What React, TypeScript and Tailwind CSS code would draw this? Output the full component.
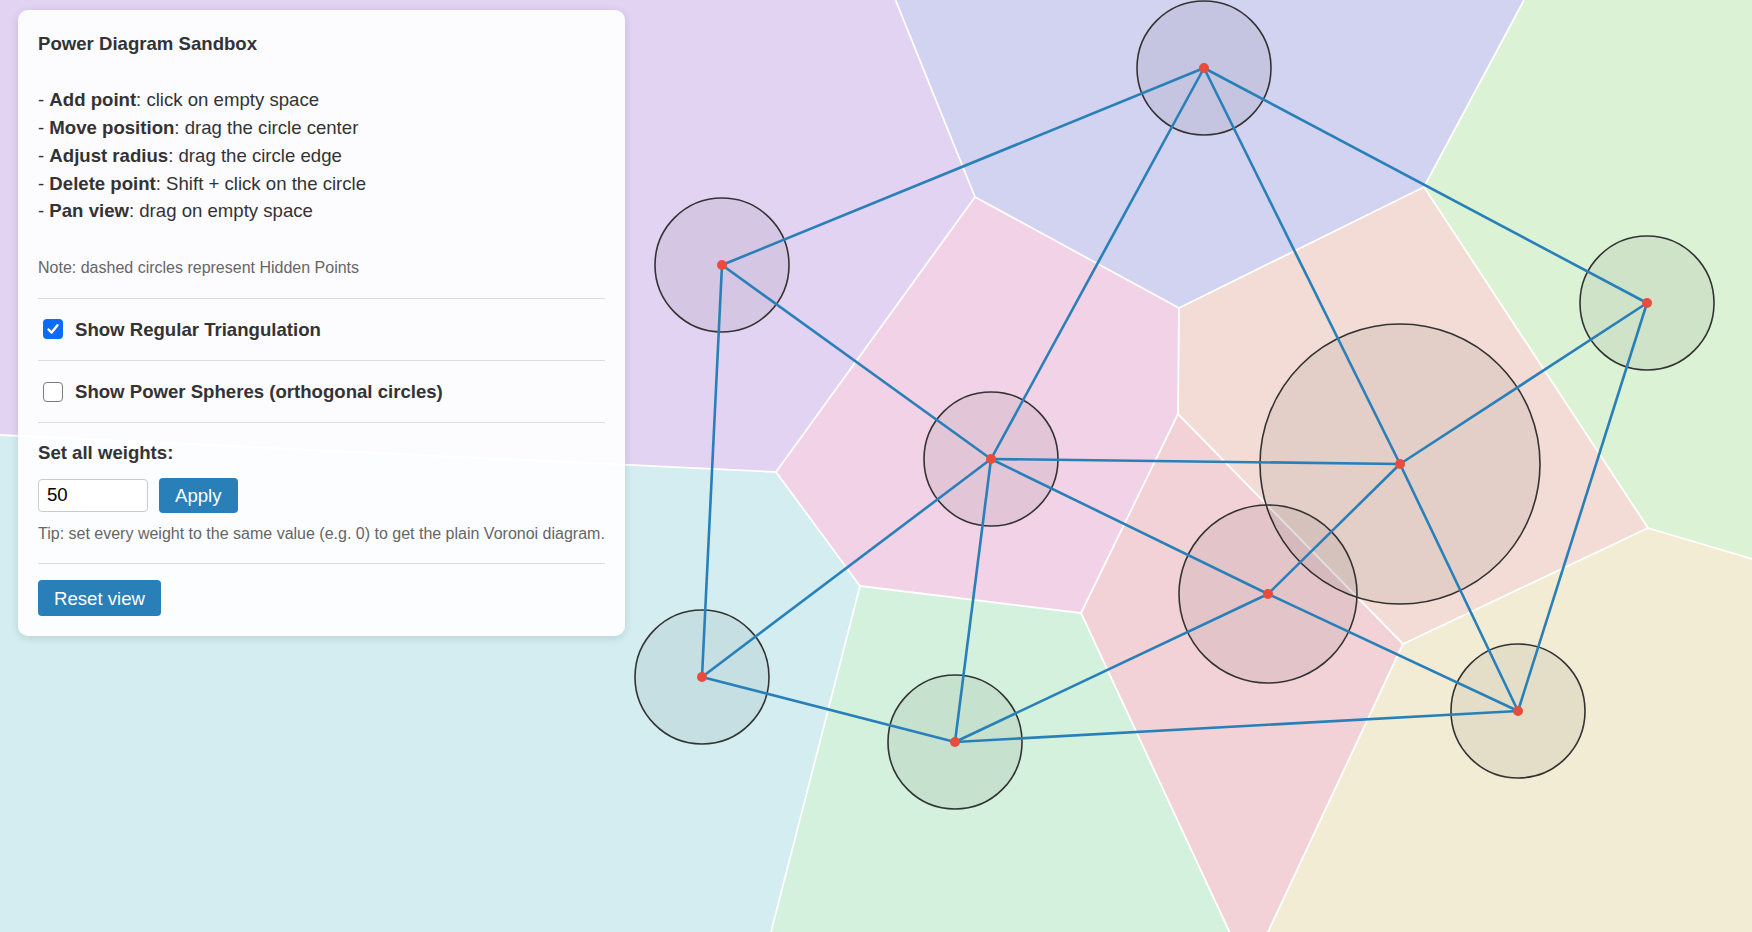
import React, { useState } from 'react'

type Site = { id: string; x: number; y: number; r: number }

// weighted sites (radius = sqrt(weight) in screen units)
const sites: Site[] = [
  { id: 'a', x: 1204, y: 68, r: 67 },
  { id: 'b', x: 722, y: 265, r: 67 },
  { id: 'c', x: 991, y: 459, r: 67 },
  { id: 'd', x: 1400, y: 464, r: 140 },
  { id: 'e', x: 1647, y: 303, r: 67 },
  { id: 'f', x: 1268, y: 594, r: 89 },
  { id: 'g', x: 702, y: 677, r: 67 },
  { id: 'h', x: 955, y: 742, r: 67 },
  { id: 'i', x: 1518, y: 711, r: 67 },
]

// power diagram vertices
const V = {
  v1: [895.5, 0],
  v2: [975, 197],
  v3: [1179, 308],
  v4: [1424, 187],
  v5: [1524, 0],
  v6: [1178, 414],
  v7: [1081, 613],
  v8: [860, 586],
  v9: [776, 472],
  v10: [0, 435],
  v11: [771, 932],
  v12: [1229.5, 932],
  v13: [1403, 644],
  v14: [1268, 932],
  v15: [1648, 528],
  v16: [1752, 559],
  tl: [0, 0],
  tr: [1752, 0],
  bl: [0, 932],
  br: [1752, 932],
} as const

type VKey = keyof typeof V

const cells: { site: string; fill: string; poly: VKey[] }[] = [
  { site: 'b', fill: '#e3d3f3', poly: ['tl', 'v1', 'v2', 'v9', 'v10'] },
  { site: 'a', fill: '#d2d2f1', poly: ['v1', 'v5', 'v4', 'v3', 'v2'] },
  { site: 'e', fill: '#dcf2d5', poly: ['v5', 'tr', 'v16', 'v15', 'v4'] },
  { site: 'c', fill: '#f2d2e6', poly: ['v2', 'v3', 'v6', 'v7', 'v8', 'v9'] },
  { site: 'd', fill: '#f2dcd5', poly: ['v3', 'v4', 'v15', 'v13', 'v6'] },
  { site: 'f', fill: '#f2d2d6', poly: ['v6', 'v13', 'v14', 'v12', 'v7'] },
  { site: 'g', fill: '#d3edf1', poly: ['v10', 'v9', 'v8', 'v11', 'bl'] },
  { site: 'h', fill: '#d3f1dc', poly: ['v8', 'v7', 'v12', 'v11'] },
  { site: 'i', fill: '#f3ecd5', poly: ['v13', 'v15', 'v16', 'br', 'v14'] },
]

// cell boundaries (interior only)
const borders: [VKey, VKey][] = [
  ['v1', 'v2'], ['v2', 'v3'], ['v3', 'v4'], ['v4', 'v5'], ['v4', 'v15'],
  ['v3', 'v6'], ['v6', 'v13'], ['v6', 'v7'], ['v7', 'v8'], ['v8', 'v9'],
  ['v9', 'v2'], ['v9', 'v10'], ['v8', 'v11'], ['v7', 'v12'], ['v13', 'v14'],
  ['v13', 'v15'], ['v15', 'v16'],
]

// regular triangulation
const edges: [string, string][] = [
  ['a', 'b'], ['a', 'c'], ['a', 'd'], ['a', 'e'],
  ['b', 'c'], ['b', 'g'],
  ['c', 'd'], ['c', 'f'], ['c', 'g'], ['c', 'h'],
  ['d', 'e'], ['d', 'f'], ['d', 'i'],
  ['e', 'i'],
  ['f', 'h'], ['f', 'i'],
  ['g', 'h'], ['h', 'i'],
]

const byId = Object.fromEntries(sites.map((s) => [s.id, s]))
const pt = (k: VKey) => V[k].join(',')

function Diagram({ showTriangulation }: { showTriangulation: boolean }) {
  return (
    <svg className="block h-full w-full" viewBox="0 0 1752 932">
      {cells.map((c) => (
        <polygon key={c.site} points={c.poly.map(pt).join(' ')} fill={c.fill} />
      ))}
      {borders.map(([p, q], i) => (
        <line
          key={i}
          x1={V[p][0]}
          y1={V[p][1]}
          x2={V[q][0]}
          y2={V[q][1]}
          stroke="#ffffff"
          strokeWidth={1.8}
        />
      ))}
      {sites.map((s) => (
        <circle
          key={s.id}
          cx={s.x}
          cy={s.y}
          r={s.r}
          fill="rgba(0,0,0,0.06)"
          stroke="#333333"
          strokeWidth={1.6}
        />
      ))}
      {showTriangulation &&
        edges.map(([p, q]) => (
          <line
            key={p + q}
            x1={byId[p].x}
            y1={byId[p].y}
            x2={byId[q].x}
            y2={byId[q].y}
            stroke="#2980b9"
            strokeWidth={2.6}
          />
        ))}
      {sites.map((s) => (
        <circle key={s.id} cx={s.x} cy={s.y} r={5} fill="#e74c3c" />
      ))}
    </svg>
  )
}

function Check({ checked, label, onChange }: { checked: boolean; label: string; onChange: () => void }) {
  return (
    <label className="flex cursor-pointer items-center" onClick={onChange}>
      {checked ? (
        <span className="ml-[5px] mr-[12px] flex h-5 w-5 items-center justify-center rounded-[4px] bg-[#0b6cf6]">
          <svg width="14" height="14" viewBox="0 0 14 14">
            <path d="M2.5 7.5 L5.6 10.6 L11.5 3.2" fill="none" stroke="#fff" strokeWidth="2.4" strokeLinecap="round" strokeLinejoin="round" />
          </svg>
        </span>
      ) : (
        <span className="ml-[5px] mr-[12px] h-5 w-5 rounded-[4px] border border-[#7a7a7a] bg-white" />
      )}
      <span className="font-bold leading-[1.15]">{label}</span>
    </label>
  )
}

export default function App() {
  const [showTri, setShowTri] = useState(true)
  const [showSpheres, setShowSpheres] = useState(false)
  const [weight, setWeight] = useState('50')

  return (
    <div className="relative h-screen w-screen overflow-hidden bg-white font-['Liberation_Sans',Arial,sans-serif]">
      <Diagram showTriangulation={showTri} />

      <div className="absolute left-[18px] top-[10px] w-[607px] rounded-[10px] bg-white/90 p-5 text-[18.6px] leading-[1.15] text-[#333] shadow-[0_2px_10px_rgba(0,0,0,0.12)]">
        <div className="leading-[1.5]">
          <div className="font-bold">Power Diagram Sandbox</div>
          <div className="mt-[28px]">
            <div>- <b>Add point</b>: click on empty space</div>
            <div>- <b>Move position</b>: drag the circle center</div>
            <div>- <b>Adjust radius</b>: drag the circle edge</div>
            <div>- <b>Delete point</b>: Shift + click on the circle</div>
            <div>- <b>Pan view</b>: drag on empty space</div>
          </div>
        </div>
        <div className="mt-[34px] pb-5 text-[16px] leading-[1.15] text-[#666]">
          Note: dashed circles represent Hidden Points
        </div>

        <div className="border-t border-[#dddddd] py-5">
          <Check checked={showTri} label="Show Regular Triangulation" onChange={() => setShowTri(!showTri)} />
        </div>
        <div className="border-t border-[#dddddd] py-5">
          <Check
            checked={showSpheres}
            label="Show Power Spheres (orthogonal circles)"
            onChange={() => setShowSpheres(!showSpheres)}
          />
        </div>

        <div className="border-t border-[#dddddd] pb-5 pt-[19px]">
          <div className="font-bold leading-[1.15]">Set all weights:</div>
          <div className="mt-[14px] flex items-center gap-[11px]">
            <input
              value={weight}
              onChange={(e) => setWeight(e.target.value)}
              className="h-[33px] w-[110px] rounded-[4px] border border-[#cccccc] bg-white pl-[8px] text-[18.6px] text-black outline-none"
            />
            <button className="h-[35px] rounded-[4px] bg-[#2980b9] px-4 leading-[1.15] text-white">Apply</button>
          </div>
          <div className="mt-[12px] whitespace-nowrap text-[16px] leading-[1.15] text-[#666]">
            Tip: set every weight to the same value (e.g. 0) to get the plain Voronoi diagram.
          </div>
        </div>

        <div className="border-t border-[#dddddd] pt-4">
          <button className="h-[36px] rounded-[4px] bg-[#2980b9] px-4 leading-[1.15] text-white">Reset view</button>
        </div>
      </div>
    </div>
  )
}
